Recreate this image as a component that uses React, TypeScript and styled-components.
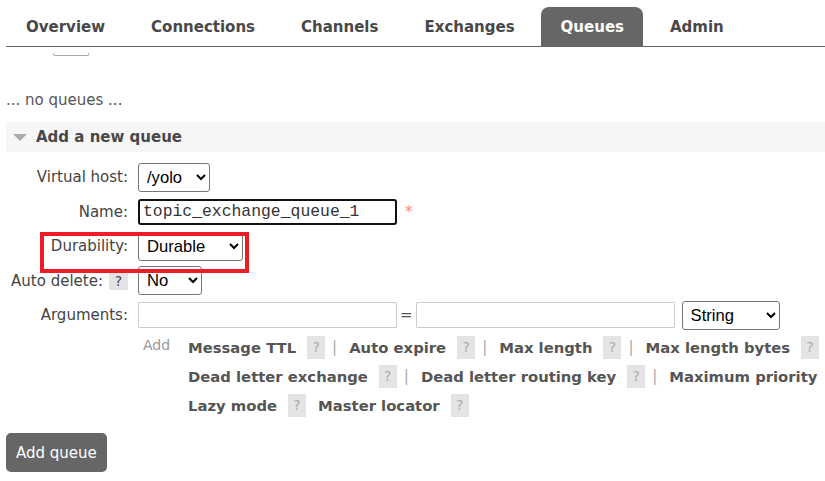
import React from 'react';
import styled, { createGlobalStyle } from 'styled-components';

const GlobalStyle = createGlobalStyle`
  html, body {
    margin: 0;
    padding: 0;
    background: #fff;
    overflow: hidden;
  }
  body {
    font-family: "DejaVu Sans", Verdana, sans-serif;
    font-size: 15px;
    color: #444;
  }
`;

const Page = styled.div`
  position: relative;
  width: 825px;
  height: 481px;
  padding-left: 6px;
  box-sizing: border-box;
`;

const Tabs = styled.ul`
  display: flex;
  list-style: none;
  margin: 7px 0 0;
  padding: 0;
  height: 39px;
  border-bottom: 1px solid #666;
  white-space: nowrap;
`;

const Tab = styled.li<{ $active?: boolean }>`
  display: flex;
  align-items: center;
  padding: 0 19px 0 20px;
  margin-right: 7px;
  font-weight: bold;
  font-size: 15px;
  color: ${(p) => (p.$active ? '#fff' : '#484848')};
  background: ${(p) => (p.$active ? '#666' : 'transparent')};
  border-radius: 8px 8px 0 0;
`;

const HiddenEdge = styled.div`
  position: absolute;
  left: 53px;
  top: 46px;
  width: 34px;
  height: 2px;
  border: 1px solid #aaa;
  border-top: none;
  border-radius: 0 0 2px 2px;
`;

const Empty = styled.p`
  margin: 44px 0 0;
  line-height: 18px;
  color: #555;
`;

const SectionHeader = styled.h2`
  display: flex;
  align-items: center;
  gap: 9px;
  margin: 13px 0 0;
  height: 30px;
  padding-left: 7px;
  background: #f6f6f6;
  font-size: 15px;
  font-weight: bold;
  color: #484848;
`;

const Triangle = styled.span`
  width: 0;
  height: 0;
  border-left: 7px solid transparent;
  border-right: 7px solid transparent;
  border-top: 7px solid #aaa;
`;

const Form = styled.div`
  display: grid;
  grid-template-columns: 122px 1fr;
  grid-auto-rows: 34.5px;
  column-gap: 10px;
  margin-top: 8px;
`;

const Label = styled.label`
  display: flex;
  align-items: center;
  justify-content: flex-end;
  gap: 6px;
  color: #444;
  white-space: nowrap;
`;

const Cell = styled.div`
  display: flex;
  align-items: center;
  white-space: nowrap;
`;

const Select = styled.select<{ $width: number; $gap?: number }>`
  width: ${(p) => p.$width}px;
  height: 29px;
  margin-left: ${(p) => p.$gap ?? 0}px;
  padding: 0 4px;
  border: 1px solid #767676;
  border-radius: 3px;
  background: #fff;
  color: #000;
  font-family: "Liberation Sans", Arial, sans-serif;
  font-size: 16.6px;
  flex-shrink: 0;
`;

const TextInput = styled.input<{ $focused?: boolean }>`
  box-sizing: border-box;
  width: 259px;
  height: 26px;
  padding: 0 3px;
  border: ${(p) => (p.$focused ? '2px solid #111' : '1px solid #ccc')};
  border-radius: ${(p) => (p.$focused ? '3px' : '1px')};
  outline: none;
  font-family: "Liberation Mono", "Courier New", monospace;
  font-size: 16.4px;
  color: #333;
  flex-shrink: 0;
`;

const Required = styled.span`
  margin-left: 8px;
  color: #f88;
  font-size: 15px;
`;

const Equals = styled.span`
  margin: 0 3px;
  color: #555;
`;

const Help = styled.span<{ $dark?: boolean }>`
  display: inline-flex;
  align-items: center;
  justify-content: center;
  flex-shrink: 0;
  width: ${(p) => (p.$dark ? '19px' : '18px')};
  height: ${(p) => (p.$dark ? '19px' : '23px')};
  background: #e4e4e4;
  color: ${(p) => (p.$dark ? '#444' : '#aaa')};
  font-size: 14px;
  font-weight: normal;
`;

const AddArea = styled.div`
  display: flex;
  margin-left: 132px;
`;

const AddWord = styled.span`
  flex-shrink: 0;
  width: 45px;
  padding-left: 5px;
  line-height: 25px;
  color: #999;
  font-size: 14px;
`;

const LinkRows = styled.div`
  display: flex;
  flex-direction: column;
`;

const LinkRow = styled.div`
  display: flex;
  align-items: center;
  height: 29px;
  white-space: nowrap;
`;

const LinkText = styled.span`
  font-weight: bold;
  font-size: 14.8px;
  color: #555;
  margin-right: 11px;
`;

const Sep = styled.span`
  margin: 0 12px 0 7px;
  color: #aaa;
`;

const Spacer = styled.span`
  flex-shrink: 0;
  width: 12px;
`;

const Button = styled.button`
  margin-top: 13.5px;
  height: 39px;
  padding: 0 10px;
  border: none;
  border-radius: 5px;
  background: #666;
  color: #fff;
  font-family: "DejaVu Sans", Verdana, sans-serif;
  font-size: 15px;
`;

const Annotation = styled.div`
  position: absolute;
  left: 40px;
  top: 225px;
  width: 209px;
  height: 41px;
  box-sizing: border-box;
  border: 4px solid #ee1c25;
  pointer-events: none;
`;

const tabs = ['Overview', 'Connections', 'Channels', 'Exchanges', 'Queues', 'Admin'];

type HelpLink = { label: string; help?: boolean; sep?: boolean };

const linkRows: HelpLink[][] = [
  [
    { label: 'Message TTL', help: true, sep: true },
    { label: 'Auto expire', help: true, sep: true },
    { label: 'Max length', help: true, sep: true },
    { label: 'Max length bytes', help: true, sep: true },
  ],
  [
    { label: 'Dead letter exchange', help: true, sep: true },
    { label: 'Dead letter routing key', help: true, sep: true },
    { label: 'Maximum priority' },
  ],
  [
    { label: 'Lazy mode', help: true },
    { label: 'Master locator', help: true },
  ],
];

const App: React.FC = () => {
  return (
    <>
      <GlobalStyle />
      <Page>
        <Tabs>
          {tabs.map((t) => (
            <Tab key={t} $active={t === 'Queues'}>
              {t}
            </Tab>
          ))}
        </Tabs>
        <HiddenEdge />

        <Empty>... no queues ...</Empty>

        <SectionHeader>
          <Triangle />
          Add a new queue
        </SectionHeader>

        <Form>
          <Label>Virtual host:</Label>
          <Cell>
            <Select $width={72} defaultValue="/yolo">
              <option>/yolo</option>
            </Select>
          </Cell>

          <Label>Name:</Label>
          <Cell>
            <TextInput $focused defaultValue="topic_exchange_queue_1" />
            <Required>*</Required>
          </Cell>

          <Label>Durability:</Label>
          <Cell>
            <Select $width={105} defaultValue="Durable">
              <option>Durable</option>
              <option>Transient</option>
            </Select>
          </Cell>

          <Label>
            Auto delete: <Help $dark>?</Help>
          </Label>
          <Cell>
            <Select $width={64} defaultValue="No">
              <option>No</option>
              <option>Yes</option>
            </Select>
          </Cell>

          <Label>Arguments:</Label>
          <Cell>
            <TextInput />
            <Equals>=</Equals>
            <TextInput />
            <Select $width={98} $gap={7} defaultValue="String">
              <option>String</option>
              <option>Number</option>
              <option>Boolean</option>
              <option>List</option>
            </Select>
          </Cell>
        </Form>

        <AddArea>
          <AddWord>Add</AddWord>
          <LinkRows>
            {linkRows.map((row, i) => (
              <LinkRow key={i}>
                {row.map((link, j) => (
                  <React.Fragment key={link.label}>
                    <LinkText>{link.label}</LinkText>
                    {link.help && <Help>?</Help>}
                    {link.sep && <Sep>|</Sep>}
                    {!link.sep && j < row.length - 1 && <Spacer />}
                  </React.Fragment>
                ))}
              </LinkRow>
            ))}
          </LinkRows>
        </AddArea>

        <Button>Add queue</Button>

        <Annotation />
      </Page>
    </>
  );
};

export default App;
